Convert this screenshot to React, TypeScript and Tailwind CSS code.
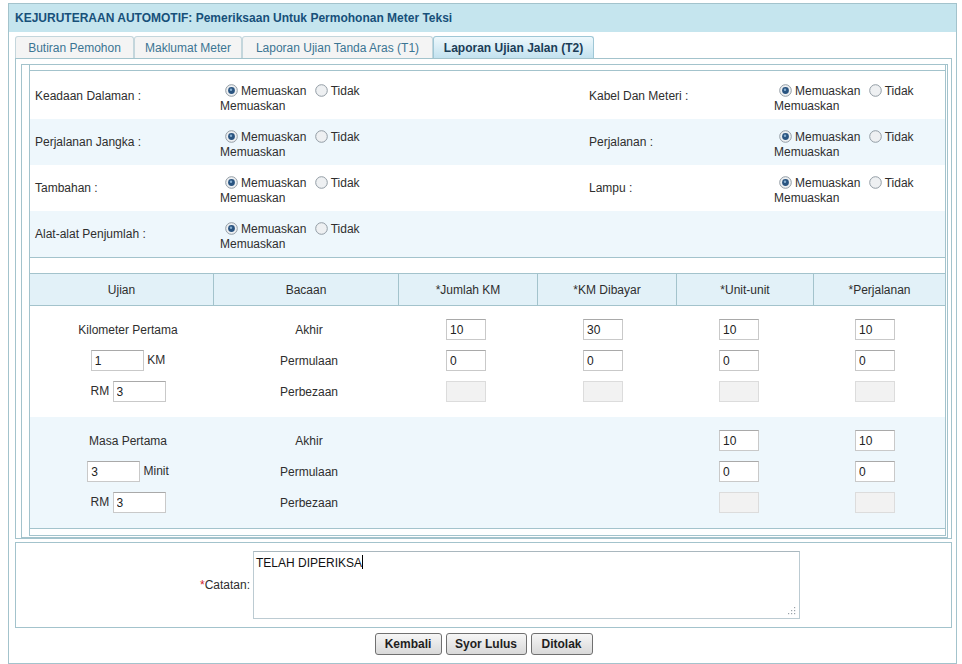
import React from "react";

const line = "border-[#a3c3cc]";

const Radio = ({ checked = false }: { checked?: boolean }) => (
  <span className="inline-block w-[13px] h-[13px] ml-[5px] mr-[3px] align-[-2px]">
    <svg width="13" height="13" viewBox="0 0 13 13">
      <circle cx="6.5" cy="6.5" r="5.8" fill="#eef0f2" stroke="#929ca4" strokeWidth="1" />
      {checked && (
        <>
          <circle cx="6.5" cy="6.5" r="3.4" fill="#2a5480" />
          <circle cx="6" cy="5.8" r="1.2" fill="#86aed0" />
        </>
      )}
    </svg>
  </span>
);

const RadioGroup = () => (
  <div className="w-[170px] leading-[15px] self-start mt-[11px]">
    <div>
      <Radio checked />Memuaskan <Radio />Tidak
    </div>
    <div>Memuaskan</div>
  </div>
);

interface CheckRow {
  left: string;
  right?: string;
  shade: boolean;
}

const checkRows: CheckRow[] = [
  { left: "Keadaan Dalaman :", right: "Kabel Dan Meteri :", shade: false },
  { left: "Perjalanan Jangka :", right: "Perjalanan :", shade: true },
  { left: "Tambahan :", right: "Lampu :", shade: false },
  { left: "Alat-alat Penjumlah :", shade: true },
];

const Field = ({ value = "", wide = false, off = false }: { value?: string; wide?: boolean; off?: boolean }) => {
  if (off) {
    return (
      <input
        readOnly
        value={value}
        className="inline-block align-middle w-[40px] h-[21px] bg-[#f2f2f2] border border-[#dcdcdc] outline-none"
      />
    );
  }
  return (
    <input
      readOnly
      value={value}
      className={`inline-block align-middle h-[21px] bg-white border border-[#c9c9c9] border-t-[#a9a9a9] pl-[3px] text-[12px] text-[#222] outline-none ${
        wide ? "w-[53px]" : "w-[40px]"
      }`}
    />
  );
};

const Line = ({ children }: { children: React.ReactNode }) => (
  <div className="grid grid-cols-[196px_166px_148px_126px_146px_126px] h-[31px] items-center text-center">{children}</div>
);

const heads = ["Ujian", "Bacaan", "*Jumlah KM", "*KM Dibayar", "*Unit-unit", "*Perjalanan"];

const tabs = [
  { label: "Butiran Pemohon", w: "w-[119px]" },
  { label: "Maklumat Meter", w: "w-[108px]" },
  { label: "Laporan Ujian Tanda Aras (T1)", w: "w-[191px]" },
];

const App = () => {
  return (
    <div className="pt-[3px] pl-[8px] font-['Liberation_Sans',Arial,sans-serif] text-[12px] text-[#2e2e2e] bg-white">
      <div className={`w-[949px] h-[661px] border ${line}`}>
        <div className="h-[28px] bg-[#c5e5ee] pl-[6px] flex items-center font-bold text-[#17507a]">
          KEJURUTERAAN AUTOMOTIF: Pemeriksaan Untuk Permohonan Meter Teksi
        </div>

        <div className="pl-[6px] pt-[4px]">
          <div className="flex h-[22px]">
            {tabs.map((t) => (
              <div
                key={t.label}
                className={`${t.w} h-[22px] flex items-center justify-center border border-b-0 border-[#c4d6dc] rounded-t-[3px] bg-[#f4f4f4] text-[#3b7593]`}
              >
                {t.label}
              </div>
            ))}
            <div className="w-[161px] h-[22px] flex items-center justify-center border border-b-0 border-[#9fc7d6] rounded-t-[3px] bg-gradient-to-b from-[#eef8fc] to-[#c3e2ef] font-bold text-[#1b3d57]">
              Laporan Ujian Jalan (T2)
            </div>
          </div>

          <div className={`w-[937px] h-[481px] border ${line} pl-[5px] pt-[5px]`}>
            <div className={`w-[927px] h-[474px] border ${line} pl-[7px]`}>
              <div className={`w-[917px] h-[6px] border-x border-b ${line}`} />

              <div className={`w-[917px] border-x border-b ${line} pt-[2px]`}>
                {checkRows.map((r) => (
                  <div
                    key={r.left}
                    className={`grid grid-cols-[190px_364px_190px_1fr] h-[46px] items-center ${
                      r.shade ? "bg-[#eef7fc]" : "bg-white"
                    }`}
                  >
                    <div className="pl-[5px]">{r.left}</div>
                    <RadioGroup />
                    {r.right ? <div className="pl-[5px]">{r.right}</div> : <div />}
                    {r.right ? <RadioGroup /> : <div />}
                  </div>
                ))}
              </div>

              <div className={`w-[917px] h-[16px] border-x border-b ${line}`} />

              <div className={`w-[917px] border-x border-b ${line}`}>
                <div className={`grid grid-cols-[184px_185px_139px_139px_137px_1fr] h-[32px] bg-[#e2f1f8] border-b ${line}`}>
                  {heads.map((h, i) => (
                    <div
                      key={h}
                      className={`flex items-center justify-center ${i < 5 ? `border-r ${line}` : ""}`}
                    >
                      {h}
                    </div>
                  ))}
                </div>

                <div className="h-[111px] pt-[8px] bg-white">
                  <Line>
                    <div>Kilometer Pertama</div>
                    <div>Akhir</div>
                    <div><Field value="10" /></div>
                    <div><Field value="30" /></div>
                    <div><Field value="10" /></div>
                    <div><Field value="10" /></div>
                  </Line>
                  <Line>
                    <div><Field value="1" wide /> KM</div>
                    <div>Permulaan</div>
                    <div><Field value="0" /></div>
                    <div><Field value="0" /></div>
                    <div><Field value="0" /></div>
                    <div><Field value="0" /></div>
                  </Line>
                  <Line>
                    <div>RM <Field value="3" wide /></div>
                    <div>Perbezaan</div>
                    <div><Field off /></div>
                    <div><Field off /></div>
                    <div><Field off /></div>
                    <div><Field off /></div>
                  </Line>
                </div>

                <div className="h-[111px] pt-[8px] bg-[#eef7fc]">
                  <Line>
                    <div>Masa Pertama</div>
                    <div>Akhir</div>
                    <div />
                    <div />
                    <div><Field value="10" /></div>
                    <div><Field value="10" /></div>
                  </Line>
                  <Line>
                    <div><Field value="3" wide /> Minit</div>
                    <div>Permulaan</div>
                    <div />
                    <div />
                    <div><Field value="0" /></div>
                    <div><Field value="0" /></div>
                  </Line>
                  <Line>
                    <div>RM <Field value="3" wide /></div>
                    <div>Perbezaan</div>
                    <div />
                    <div />
                    <div><Field off /></div>
                    <div><Field off /></div>
                  </Line>
                </div>
              </div>

              <div className={`w-[917px] h-[7px] border-x border-b ${line}`} />
            </div>
          </div>

          <div className={`mt-[3px] w-[937px] h-[86px] border ${line} flex items-start pt-[8px]`}>
            <div className="w-[237px] h-[68px] pr-[3px] flex items-center justify-end">
              <span className="text-[#d0202a]">*</span>Catatan:
            </div>
            <div className="relative w-[547px] h-[68px] border border-[#bccbd2] border-t-[#a9b7be] pl-[2px] pt-[2px] text-[#111]">
              TELAH DIPERIKSA<span className="inline-block w-[1px] h-[14px] bg-black align-[-2px]" />
              <svg className="absolute right-[3px] bottom-[3px]" width="8" height="8" viewBox="0 0 8 8">
                <rect x="6" y="0" width="1.2" height="1.2" fill="#9aa2a8" />
                <rect x="3" y="3" width="1.2" height="1.2" fill="#9aa2a8" />
                <rect x="6" y="3" width="1.2" height="1.2" fill="#9aa2a8" />
                <rect x="0" y="6" width="1.2" height="1.2" fill="#9aa2a8" />
                <rect x="3" y="6" width="1.2" height="1.2" fill="#9aa2a8" />
                <rect x="6" y="6" width="1.2" height="1.2" fill="#9aa2a8" />
              </svg>
            </div>
          </div>

          <div className="mt-[5px] flex justify-center gap-[4px] w-[937px]">
            {[
              { t: "Kembali", w: "w-[67px]" },
              { t: "Syor Lulus", w: "w-[81px]" },
              { t: "Ditolak", w: "w-[62px]" },
            ].map((b) => (
              <button
                key={b.t}
                className={`${b.w} h-[22px] border border-[#707070] rounded-[3px] bg-gradient-to-b from-[#f6f6f6] to-[#d9d9d9] font-bold text-[12px] text-[#1e1e1e]`}
              >
                {b.t}
              </button>
            ))}
          </div>
        </div>
      </div>
    </div>
  );
};

export default App;
